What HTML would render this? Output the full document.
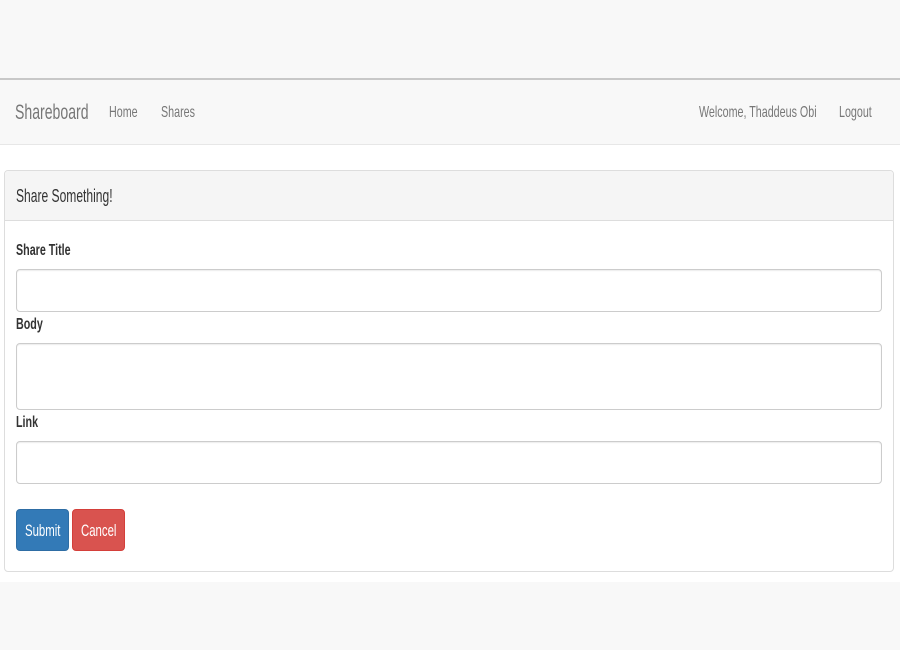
<!DOCTYPE html>
<html><head><style>
body{margin:0;width:900px;height:650px;background:#f8f8f8;font-family:"Liberation Sans",sans-serif;position:relative;overflow:hidden}
.a{position:absolute;white-space:nowrap;transform:scaleX(.67);transform-origin:left center;line-height:1}
.topline{position:absolute;left:0;top:78px;width:900px;height:2px;background:#c8c8c8}
.nav{position:absolute;left:0;top:80px;width:900px;height:64px;background:#f8f8f8;border-bottom:1px solid #e7e7e7}
.main{position:absolute;left:0;top:145px;width:900px;height:437px;background:#fff}
.panel{position:absolute;left:4px;top:170px;width:888px;height:400px;border:1px solid #ddd;border-radius:4px;background:#fff}
.ph{position:absolute;left:0;top:0;width:888px;height:49px;background:#f5f5f5;border-bottom:1px solid #ddd;border-radius:4px 4px 0 0}
.in{position:absolute;left:16px;width:864px;border:1px solid #ccc;border-radius:4px;background:#fff;box-shadow:inset 0 1px 1px rgba(0,0,0,.075)}
.btn{position:absolute;top:509px;height:40px;border-radius:4px}
</style></head><body>
<div class="topline"></div>
<div class="nav"></div>
<div class="a" style="left:15px;top:102px;font-size:21px;color:#777">Shareboard</div>
<div class="a" style="left:109px;top:105px;font-size:16px;color:#777">Home</div>
<div class="a" style="left:161px;top:105px;font-size:16px;color:#777">Shares</div>
<div class="a" style="left:699px;top:105px;font-size:16px;color:#777">Welcome, Thaddeus Obi</div>
<div class="a" style="left:839px;top:105px;font-size:16px;color:#777">Logout</div>
<div class="main"></div>
<div class="panel"><div class="ph"></div></div>
<div class="a" style="left:16px;top:187px;font-size:18px;color:#333">Share Something!</div>
<div class="a" style="left:16px;top:243px;font-size:16px;color:#333;font-weight:bold">Share Title</div>
<div class="in" style="top:269px;height:41px"></div>
<div class="a" style="left:16px;top:317px;font-size:16px;color:#333;font-weight:bold">Body</div>
<div class="in" style="top:343px;height:65px"></div>
<div class="a" style="left:16px;top:415px;font-size:16px;color:#333;font-weight:bold">Link</div>
<div class="in" style="top:441px;height:41px"></div>
<div class="btn" style="left:16px;width:53px;background:#337ab7;border:1px solid #2e6da4;box-sizing:border-box;height:42px"></div>
<div class="btn" style="left:72px;width:53px;background:#d9534f;border:1px solid #d43f3a;box-sizing:border-box;height:42px"></div>
<div class="a" style="left:25px;top:522px;font-size:17px;color:#fff">Submit</div>
<div class="a" style="left:81px;top:522px;font-size:17px;color:#fff">Cancel</div>
</body></html>
